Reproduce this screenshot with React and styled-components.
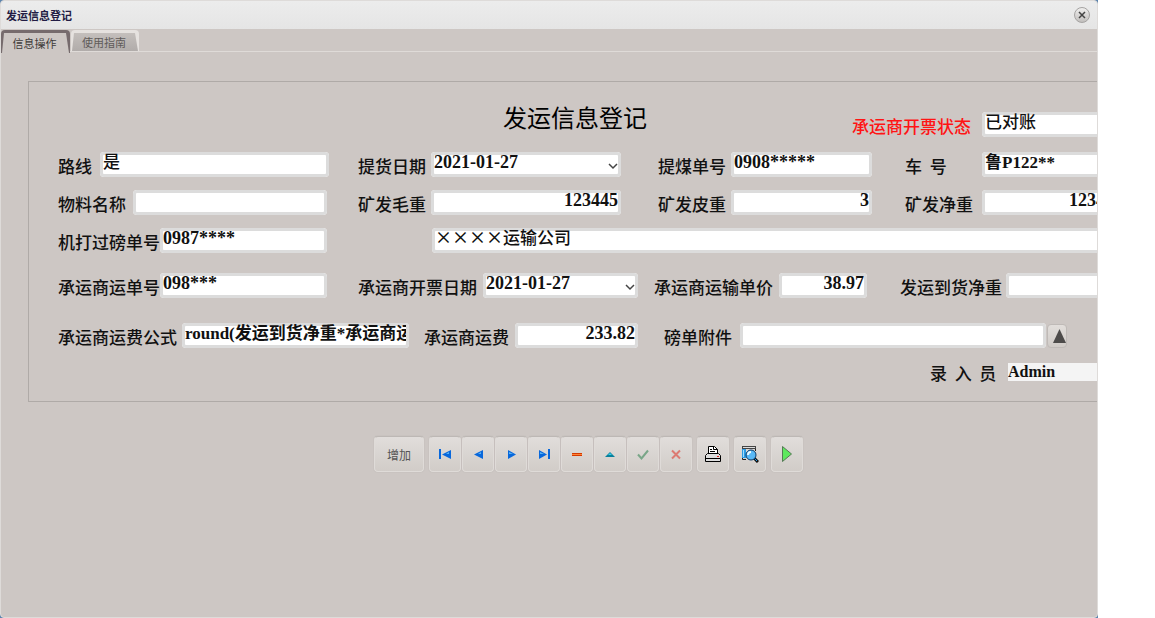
import styled, { createGlobalStyle } from "styled-components";

const GlobalStyle = createGlobalStyle`
  * {
    box-sizing: border-box;
  }
  body {
    margin: 0;
    background: #fff;
    font-family: "Noto Sans CJK SC", sans-serif;
  }
`;
const Fundo = styled.div`
  margin-right: 57px;
  min-height: 100vh;
  display: flex;
  background: #5b83ad;
`;
const Janela = styled.main`
  flex: 1;
  min-width: 0;
  overflow: hidden;
  background: #cdc7c4;
  border: 1px solid #dedbd9;
  border-radius: 4px;
`;
const Cabecalho = styled.header`
  display: flex;
  align-items: center;
  justify-content: space-between;
  height: 28px;
  padding: 0 7px 0 5px;
  background: linear-gradient(#ececec, #e5e5e5);
`;
const TituloJanela = styled.h1`
  margin: 0;
  color: #221c44;
  font-size: 11px;
  line-height: 16px;
`;
const BotaoFechar = styled.button`
  display: flex;
  align-items: center;
  justify-content: center;
  width: 16px;
  height: 16px;
  padding: 0;
  border: 1px solid #a5a3a2;
  border-radius: 50%;
  background: linear-gradient(#f0efee, #c2bfbd);
`;
const Abas = styled.nav`
  display: flex;
  gap: 1px;
  height: 24px;
  padding-top: 1px;
  background: linear-gradient(#dfdbd8, #dfdbd8) 0 22px / 100% 1px no-repeat;
`;
const Aba = styled.button`
  position: relative;
  z-index: 0;
  width: ${(props) => (props.$ativa ? "69px" : "68px")};
  height: ${(props) => (props.$ativa ? "23px" : "21px")};
  padding: 2px 2px 0 0;
  border: 0;
  border-radius: 4px 4px 0 0;
  background: ${(props) => (props.$ativa ? "#766b6d" : "#e6e2df")};
  color: ${(props) => (props.$ativa ? "#3d3a39" : "#5f5b59")};
  font-family: inherit;
  font-size: 11px;
  line-height: 16px;

  &::before {
    content: "";
    position: absolute;
    z-index: -1;
    inset: 3px 1px 0;
    background: ${(props) =>
      props.$ativa ? "#cdc7c4" : "linear-gradient(#c4bfbc, #b1acaa)"};
    clip-path: polygon(2px 0, calc(100% - 3px) 0, 100% 100%, 0 100%);
  }
`;
const Conteudo = styled.div`
  margin-right: -80px;
  padding: 28px 28px 0 27px;
`;
const Formulario = styled.form`
  padding: 17px 22px 18px 29px;
  border: 1px solid #afaaa7;
`;
const Linha = styled.div`
  display: grid;
  grid-template-columns: ${(props) => props.$colunas};
  align-items: end;
  margin-top: ${(props) => props.$topo || 0}px;
`;
const Titulo = styled.h2`
  grid-column: 2;
  margin: 0;
  font-size: 24px;
  font-weight: 400;
  line-height: 36px;
  padding-bottom: 2px;
`;
const CampoBox = styled.div`
  display: flex;
  align-items: center;
  min-width: 0;
  padding-right: ${(props) => props.$fim || 0}px;
`;
const Rotulo = styled.label`
  flex: none;
  width: ${(props) => props.$largura}px;
  padding-top: 2px;
  color: ${(props) => (props.$alerta ? "#ff1414" : "#111")};
  font-size: 17px;
  font-weight: 500;
  line-height: 20px;
  white-space: pre;
`;
const Entrada = styled.input`
  flex: 1;
  min-width: 0;
  width: 100%;
  height: 25px;
  padding: ${(props) => (props.$numero ? "0 3px 5px" : "0 3px 8px")};
  border: 0;
  border-radius: 4px;
  background: #fff;
  box-shadow: inset 0 0 0 3px #dcdcdc;
  color: #111;
  font-family: ${(props) =>
    props.$cjk
      ? '"Noto Sans CJK SC", sans-serif'
      : '"Liberation Serif", "Noto Sans CJK SC", serif'};
  font-size: ${(props) => (props.$numero ? "18px" : "17px")};
  font-weight: ${(props) => (props.$cjk ? 500 : 600)};
  line-height: 20px;
  text-align: ${(props) => (props.$direita ? "right" : "left")};
  outline: none;
`;
const CaixaSelecao = styled.div`
  position: relative;
  display: flex;
  flex: 1;
  min-width: 0;

  select {
    appearance: none;
  }
  svg {
    position: absolute;
    right: 3px;
    bottom: 7px;
    pointer-events: none;
  }
`;
const EntradaSimples = styled(Entrada)`
  height: 18px;
  padding: 0;
  border-radius: 0;
  background: #f4f4f4;
  box-shadow: none;
  font-size: 16px;
`;
const BotaoAnexo = styled.button`
  display: flex;
  align-items: center;
  justify-content: flex-end;
  width: 20px;
  height: 24px;
  margin-left: 1px;
  padding: 0;
  border: 1px solid #bfbab7;
  border-radius: 4px;
  background: linear-gradient(#e2dedb, #d0cbc7);
`;
const Barra = styled.div`
  display: flex;
  justify-content: center;
  gap: 5px;
  margin-top: 34px;
`;
const Grupo = styled.div`
  display: flex;
  gap: 1px;
`;
const Botao = styled.button`
  display: flex;
  align-items: center;
  justify-content: center;
  width: ${(props) => (props.$largo ? "50px" : "32px")};
  height: 36px;
  padding: 0;
  border: 1px solid #dfdbd8;
  border-top-color: #bdb8b5;
  border-radius: 4px;
  background: linear-gradient(#e1dddb, #d1ccc8);
  box-shadow: 0 0 1px #a8a3a0;
  color: #555;
  font-family: inherit;
  font-size: 12px;
`;

const azul = "#0868dc";

const icones = {
  primeiro: (
    <>
      <path d="M3 3v10" stroke={azul} strokeWidth="2" />
      <path d="M14 4v9L5 8.500z" fill={azul} />
      <path d="M12 6v2H9z" fill="#58b4f5" />
    </>
  ),
  anterior: (
    <>
      <path d="M13 4v9L4 8.500z" fill={azul} />
      <path d="M11 6v2H8z" fill="#58b4f5" />
    </>
  ),
  proximo: (
    <>
      <path d="M5 4v9l8-4.500z" fill={azul} />
      <path d="M6 6v2h4z" fill="#58b4f5" />
    </>
  ),
  ultimo: (
    <>
      <path d="M3 4v9l8-4.500z" fill={azul} />
      <path d="M4 6v2h4z" fill="#58b4f5" />
      <path d="M13 3v10" stroke={azul} strokeWidth="2" />
    </>
  ),
  excluir: (
    <>
      <path d="M3 7h10v3H3z" fill="#d43a00" />
      <path d="M3 8h10v1H3z" fill="#ff8438" />
    </>
  ),
  editar: (
    <>
      <path d="M3 11l5-5 5 5z" fill="#08809c" />
      <path d="M6 9l2-2 2 2z" fill="#36cce8" />
    </>
  ),
  gravar: (
    <path d="M3 8.500l3.500 4L13 4.500" fill="none" stroke="#79a688" strokeWidth="2" />
  ),
  cancelar: (
    <path d="M4 4.500l8 8M12 4.500l-8 8" stroke="#dc7a72" strokeWidth="2" />
  ),
};

function Icone({ nome }) {
  return (
    <svg width="16" height="16" viewBox="0 0 16 16" aria-hidden="true">
      {icones[nome]}
    </svg>
  );
}

function IconeImprimir() {
  return (
    <svg width="18" height="18" viewBox="0 0 18 18" aria-hidden="true">
      <path d="M4.500 8.500v-7h6l3 3v4z" fill="#fff" stroke="#000" />
      <path d="M9.500 1.500v3h4M6 4.500h2M6 6.500h5" fill="none" stroke="#000" />
      <path d="M3.500 8.500h11l2 2v6h-15v-6z" fill="#ddd" stroke="#000" />
      <path d="M1.500 13.500h15" stroke="#000" />
      <path d="M13 11h2v1h-2z" fill="#e02020" />
    </svg>
  );
}

function IconeVisualizar() {
  return (
    <svg width="18" height="18" viewBox="0 0 18 18" aria-hidden="true">
      <path d="M1 1h14v3H1z" fill="#444" />
      <path d="M2 2h12v1H2z" fill="#ddd" />
      <path d="M1 4h4v9H1z" fill="#2c9be4" />
      <path d="M2 5h1v7H2z" fill="#a4dcfb" />
      <path d="M1.500 13v1.500H5M14.500 4v2" fill="none" stroke="#222" />
      <path d="M13 13l4 4" stroke="#111" strokeWidth="3" />
      <path d="M13 13l3 3" stroke="#239be8" />
      <circle cx="10" cy="10" r="5" fill="#58b8f6" stroke="#0c3a68" />
      <path d="M7 10a3 3 0 0 1 3-3" fill="none" stroke="#f0fbff" strokeWidth="2" />
    </svg>
  );
}

function IconeExecutar() {
  return (
    <svg width="16" height="18" viewBox="0 0 16 18" aria-hidden="true">
      <path d="M3.500 1.500v15l9-7.500z" fill="#5ee85e" stroke="#557a55" />
    </svg>
  );
}

function Campo({ id, rotulo, largura, fim, alerta, valor, children, ...resto }) {
  return (
    <CampoBox $fim={fim}>
      <Rotulo htmlFor={id} $largura={largura} $alerta={alerta}>
        {rotulo}
      </Rotulo>
      <Entrada id={id} defaultValue={valor} {...resto} />
      {children}
    </CampoBox>
  );
}

function CampoData({ id, rotulo, largura, fim, valor }) {
  return (
    <CampoBox $fim={fim}>
      <Rotulo htmlFor={id} $largura={largura}>
        {rotulo}
      </Rotulo>
      <CaixaSelecao>
        <Entrada as="select" id={id} $numero>
          <option>{valor}</option>
        </Entrada>
        <svg width="10" height="8" viewBox="0 0 10 8" aria-hidden="true">
          <path d="M1 2l4 4 4-4" fill="none" stroke="#444" strokeWidth="1.500" />
        </svg>
      </CaixaSelecao>
    </CampoBox>
  );
}

function App() {
  return (
    <Fundo>
      <GlobalStyle />
      <Janela>
        <Cabecalho>
          <TituloJanela>发运信息登记</TituloJanela>
          <BotaoFechar aria-label="关闭">
            <svg width="8" height="8" viewBox="0 0 8 8" aria-hidden="true">
              <path d="M1 1l6 6M7 1L1 7" stroke="#444" strokeWidth="1.500" />
            </svg>
          </BotaoFechar>
        </Cabecalho>
        <Abas>
          <Aba $ativa>信息操作</Aba>
          <Aba>使用指南</Aba>
        </Abas>
        <Conteudo>
          <Formulario onSubmit={(evento) => evento.preventDefault()}>
            <Linha $colunas="445fr 349fr 274fr">
              <Titulo>发运信息登记</Titulo>
              <Campo id="status" rotulo="承运商开票状态" largura={130} alerta valor="已对账" $cjk />
            </Linha>
            <Linha $colunas="300fr 300fr 247fr 221fr" $topo={15}>
              <Campo id="rota" rotulo="路线" largura={42} fim={29} valor="是" $cjk />
              <CampoData id="coleta" rotulo="提货日期" largura={73} fim={37} valor="2021-01-27" />
              <Campo id="carvao" rotulo="提煤单号" largura={73} fim={33} valor="0908*****" $numero />
              <Campo id="placa" rotulo="车  号" largura={77} valor="鲁P122**" />
            </Linha>
            <Linha $colunas="300fr 300fr 247fr 221fr" $topo={13}>
              <Campo id="material" rotulo="物料名称" largura={75} fim={31} />
              <Campo id="bruto" rotulo="矿发毛重" largura={73} fim={37} valor="123445" $numero $direita />
              <Campo id="tara" rotulo="矿发皮重" largura={73} fim={33} valor="3" $numero $direita />
              <Campo id="liquido" rotulo="矿发净重" largura={77} valor="123442" $numero $direita />
            </Linha>
            <Linha $colunas="374fr 694fr" $topo={13}>
              <Campo id="balanca" rotulo="机打过磅单号" largura={102} fim={105} valor="0987****" $numero />
              <Entrada aria-label="运输公司" defaultValue="××××运输公司" $cjk />
            </Linha>
            <Linha $colunas="300fr 296fr 246fr 226fr" $topo={20}>
              <Campo id="frete" rotulo="承运商运单号" largura={102} fim={31} valor="098***" $numero />
              <CampoData id="fatura" rotulo="承运商开票日期" largura={125} fim={16} valor="2021-01-27" />
              <Campo id="preco" rotulo="承运商运输单价" largura={125} fim={33} valor="38.97" $numero $direita />
              <Campo id="chegada" rotulo="发运到货净重" largura={106} />
            </Linha>
            <Linha $colunas="366fr 240fr 462fr" $topo={25}>
              <Campo id="formula" rotulo="承运商运费公式" largura={124} fim={15} valor="round(发运到货净重*承运商运输单价,2)" />
              <Campo id="custo" rotulo="承运商运费" largura={91} fim={26} valor="233.82" $numero $direita />
              <Campo id="anexo" rotulo="磅单附件" largura={76} fim={59}>
                <BotaoAnexo type="button" aria-label="上传附件">
                  <svg width="13" height="14" viewBox="0 0 13 14" aria-hidden="true">
                    <path d="M6.500 0L13 14H0z" fill="#4d4b4a" />
                  </svg>
                </BotaoAnexo>
              </Campo>
            </Linha>
            <Linha $colunas="872fr 196fr" $topo={13}>
              <span />
              <CampoBox>
                <Rotulo htmlFor="operador" $largura={78}>
                  录  入  员
                </Rotulo>
                <EntradaSimples id="operador" defaultValue="Admin" readOnly />
              </CampoBox>
            </Linha>
          </Formulario>
          <Barra>
            <Botao $largo>增加</Botao>
            <Grupo>
              <Botao aria-label="第一条"><Icone nome="primeiro" /></Botao>
              <Botao aria-label="上一条"><Icone nome="anterior" /></Botao>
              <Botao aria-label="下一条"><Icone nome="proximo" /></Botao>
              <Botao aria-label="最后一条"><Icone nome="ultimo" /></Botao>
              <Botao aria-label="删除"><Icone nome="excluir" /></Botao>
              <Botao aria-label="编辑"><Icone nome="editar" /></Botao>
              <Botao aria-label="保存" disabled><Icone nome="gravar" /></Botao>
              <Botao aria-label="取消" disabled><Icone nome="cancelar" /></Botao>
            </Grupo>
            <Botao aria-label="打印"><IconeImprimir /></Botao>
            <Botao aria-label="预览"><IconeVisualizar /></Botao>
            <Botao aria-label="执行"><IconeExecutar /></Botao>
          </Barra>
        </Conteudo>
      </Janela>
    </Fundo>
  );
}

export default App;
